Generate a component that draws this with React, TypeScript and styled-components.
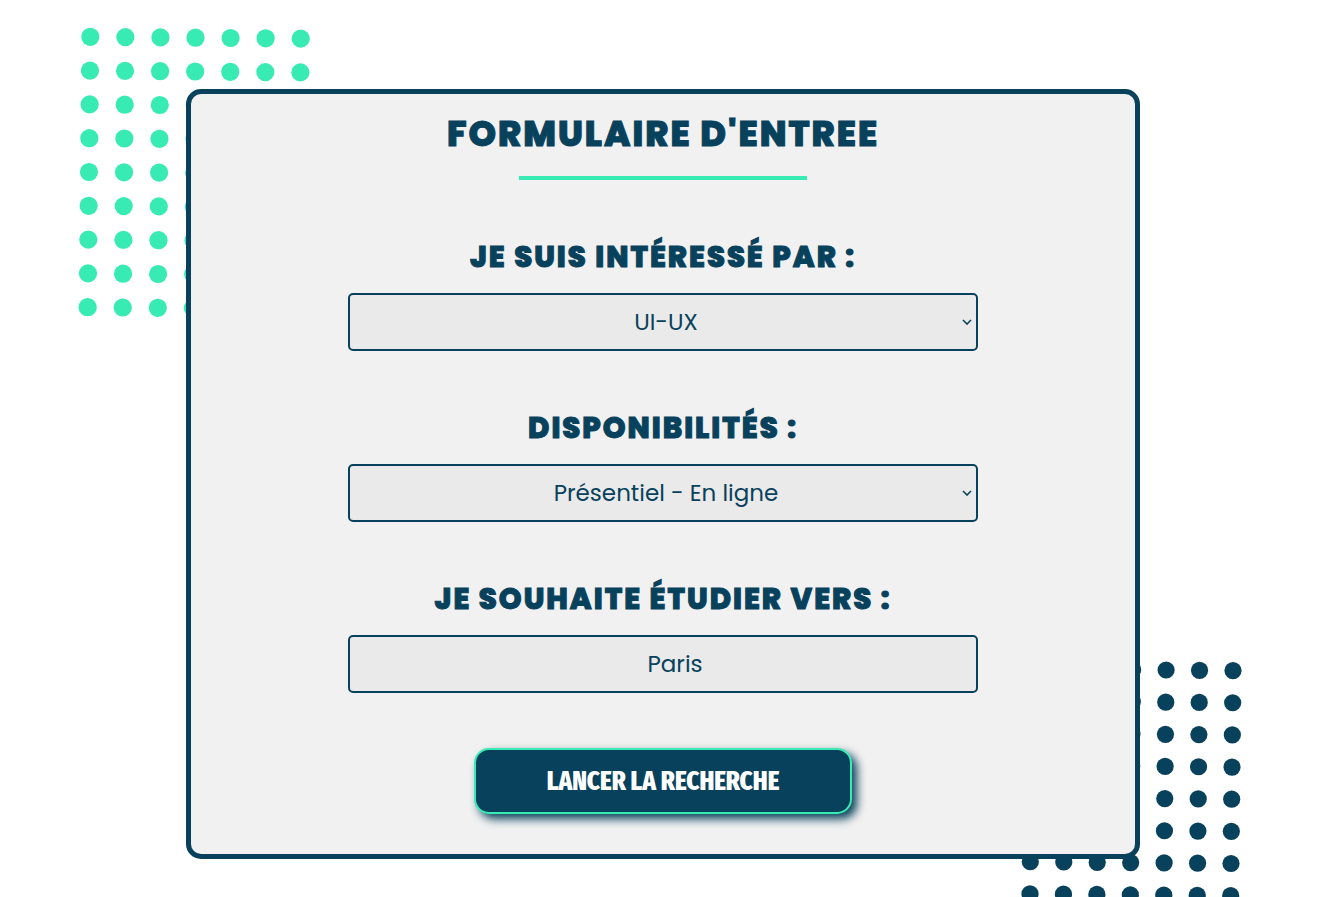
import React from "react";
import styled, { createGlobalStyle, css } from "styled-components";

const navy = "#08415c";
const mint = "#38ebb3";

const GlobalStyle = createGlobalStyle`
  *, *::before, *::after { box-sizing: border-box; }
  body {
    margin: 0;
    background: #fff;
    color: ${navy};
    font-family: Poppins, Inter, sans-serif;
  }
`;

const Page = styled.main`
  position: relative;
  min-height: 100vh;
  padding: 89px 177px 38px 186px;
  overflow: hidden;
`;

const Dots = styled.svg<{ $corner: "start" | "end" }>`
  position: absolute;
  ${({ $corner }) =>
    $corner === "start"
      ? css`
          top: 20px;
          left: 70px;
        `
      : css`
          top: 652px;
          right: 55px;
        `}
`;

const Card = styled.form`
  position: relative;
  display: flex;
  flex-direction: column;
  align-items: center;
  padding: 13px 0 40px;
  border: 5px solid ${navy};
  border-radius: 15px;
  background: #f1f1f1;
`;

const heading = css`
  font-weight: 800;
  letter-spacing: 2px;
  text-transform: uppercase;
  -webkit-text-stroke: 1px ${navy};
`;

const Title = styled.h1`
  ${heading}
  margin: 0;
  font-size: 35px;
  line-height: 54px;
`;

const Rule = styled.hr`
  width: 288px;
  height: 4px;
  margin: 15px 0 54px;
  border: 0;
  background: ${mint};
`;

const Fields = styled.div`
  display: flex;
  flex-direction: column;
  gap: 54px;
  width: 66.7%;
`;

const Field = styled.div`
  display: flex;
  flex-direction: column;
  gap: 13px;
`;

const Label = styled.label`
  ${heading}
  font-size: 29px;
  line-height: 46px;
  text-align: center;
`;

const control = css`
  width: 100%;
  height: 58px;
  border: 2px solid ${navy};
  border-radius: 5px;
  background: #eaeaea;
  color: ${navy};
  font-family: inherit;
  font-size: 23px;
  text-align: center;
`;

const SelectBox = styled.div`
  position: relative;
  display: flex;
`;

const Select = styled.select`
  ${control}
  appearance: none;
  padding: 0 16px 0 22px;
`;

const Chevron = styled.svg`
  position: absolute;
  top: 50%;
  right: 6px;
  width: 10px;
  height: 6px;
  margin-top: -3px;
  fill: none;
  stroke: ${navy};
  stroke-width: 1.6;
  pointer-events: none;
`;

const Input = styled.input`
  ${control}
  padding: 0 0 0 24px;
`;

const Submit = styled.button`
  width: 40%;
  height: 66px;
  margin-top: 55px;
  border: 2px solid ${mint};
  border-radius: 15px;
  background: ${navy};
  box-shadow: 5px 5px 10px ${navy};
  color: #fff;
  font-family: "Fira Sans Extra Condensed", "Liberation Sans Narrow", "Liberation Sans", sans-serif;
  font-size: 27px;
  font-weight: 800;
  text-transform: uppercase;
`;

type DotGridProps = {
  corner: "start" | "end";
  color: string;
  radius: number;
  stepX: number;
  stepY: number;
};

function DotGrid({ corner, color, radius, stepX, stepY }: DotGridProps) {
  const dots = [];
  for (let row = 0; row < 9; row++) {
    for (let col = 0; col < 7; col++) {
      dots.push(
        <circle
          key={`${row}-${col}`}
          cx={20.3 + col * stepX - row * 0.33}
          cy={16.8 + col * 0.3 + row * stepY}
          r={radius}
        />
      );
    }
  }
  return (
    <Dots $corner={corner} width={250} height={310} fill={color} aria-hidden="true">
      {dots}
    </Dots>
  );
}

type SelectFieldProps = { id: string; label: string; options: string[] };

function SelectField({ id, label, options }: SelectFieldProps) {
  return (
    <Field>
      <Label htmlFor={id}>{label}</Label>
      <SelectBox>
        <Select id={id} defaultValue={options[0]}>
          {options.map((option) => (
            <option key={option}>{option}</option>
          ))}
        </Select>
        <Chevron viewBox="0 0 10 6" aria-hidden="true">
          <path d="M1 1 5 5 9 1" />
        </Chevron>
      </SelectBox>
    </Field>
  );
}

export default function App() {
  return (
    <>
      <GlobalStyle />
      <Page>
        <DotGrid corner="start" color={mint} radius={9.1} stepX={35.07} stepY={33.8} />
        <DotGrid corner="end" color={navy} radius={8.6} stepX={33.45} stepY={32.15} />
        <Card onSubmit={(event) => event.preventDefault()}>
          <Title>Formulaire d'entree</Title>
          <Rule />
          <Fields>
            <SelectField id="interest" label="Je suis intéressé par :" options={["UI-UX"]} />
            <SelectField id="availability" label="Disponibilités :" options={["Présentiel - En ligne"]} />
            <Field>
              <Label htmlFor="city">Je souhaite étudier vers :</Label>
              <Input id="city" type="text" defaultValue="Paris" />
            </Field>
          </Fields>
          <Submit type="submit">Lancer la recherche</Submit>
        </Card>
      </Page>
    </>
  );
}
